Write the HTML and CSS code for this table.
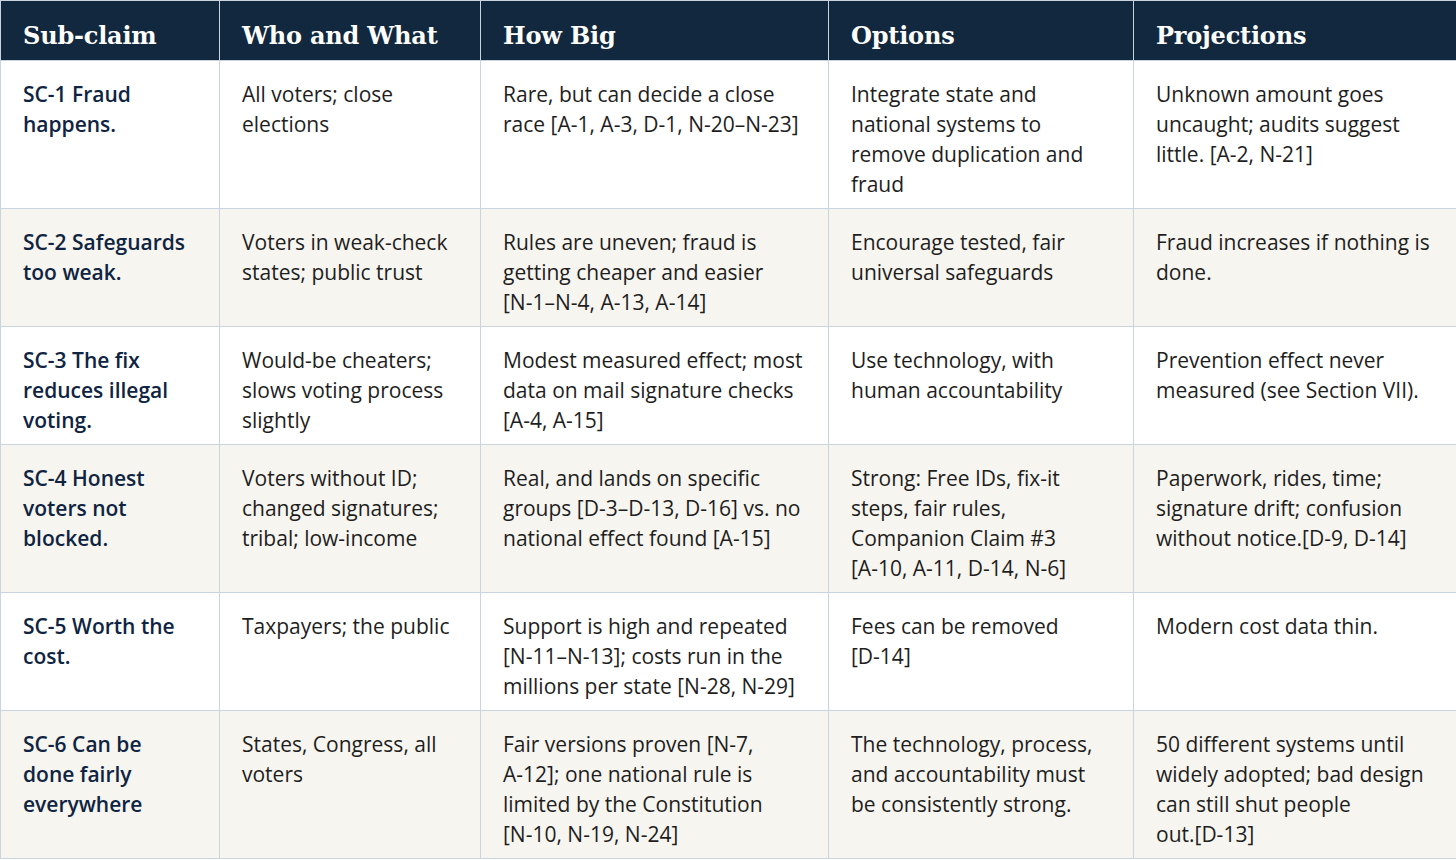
FILE: index.html
```html
<!DOCTYPE html>
<html lang="en">
<head>
<meta charset="utf-8">
<title>Sub-claims</title>
<link rel="stylesheet" href="styles.css">
</head>
<body>
<table class="claims">
  <colgroup>
    <col class="c1"><col class="c2"><col class="c3"><col class="c4"><col class="c5">
  </colgroup>
  <thead>
    <tr>
      <th>Sub-claim</th>
      <th>Who and What</th>
      <th>How Big</th>
      <th>Options</th>
      <th>Projections</th>
    </tr>
  </thead>
  <tbody>
    <tr>
      <td class="claim">SC-1 Fraud happens.</td>
      <td>All voters; close elections</td>
      <td>Rare, but can decide a close race [A-&#8288;1, A-&#8288;3, D-&#8288;1, N-&#8288;20–&#8288;N-&#8288;23]</td>
      <td>Integrate state and national systems to remove duplication and fraud</td>
      <td>Unknown amount goes uncaught; audits suggest little. [A-&#8288;2, N-&#8288;21]</td>
    </tr>
    <tr>
      <td class="claim">SC-2 Safeguards too weak.</td>
      <td>Voters in weak-check states; public trust</td>
      <td>Rules are uneven; fraud is getting cheaper and easier [N-&#8288;1–&#8288;N-&#8288;4, A-&#8288;13, A-&#8288;14]</td>
      <td>Encourage tested, fair universal safeguards</td>
      <td>Fraud increases if nothing is done.</td>
    </tr>
    <tr>
      <td class="claim">SC-3 The fix reduces illegal voting.</td>
      <td>Would-be cheaters; slows voting process slightly</td>
      <td>Modest measured effect; most data on mail signature checks [A-&#8288;4, A-&#8288;15]</td>
      <td>Use technology, with human accountability</td>
      <td>Prevention effect never measured (see Section VII).</td>
    </tr>
    <tr>
      <td class="claim">SC-4 Honest voters not blocked.</td>
      <td>Voters without ID; changed signatures; tribal; low-income</td>
      <td>Real, and lands on specific groups [D-&#8288;3–&#8288;D-&#8288;13, D-&#8288;16] vs. no national effect found [A-&#8288;15]</td>
      <td>Strong: Free IDs, fix-it steps, fair rules, Companion Claim #3 [A-&#8288;10, A-&#8288;11, D-&#8288;14, N-&#8288;6]</td>
      <td>Paperwork, rides, time; signature drift; confusion without notice.&#8288;[D-&#8288;9, D-&#8288;14]</td>
    </tr>
    <tr>
      <td class="claim">SC-5 Worth the cost.</td>
      <td>Taxpayers; the public</td>
      <td>Support is high and repeated [N-&#8288;11–&#8288;N-&#8288;13]; costs run in the millions per state [N-&#8288;28, N-&#8288;29]</td>
      <td>Fees can be removed [D-&#8288;14]</td>
      <td>Modern cost data thin.</td>
    </tr>
    <tr>
      <td class="claim">SC-6 Can be done fairly everywhere</td>
      <td>States, Congress, all voters</td>
      <td>Fair versions proven [N-&#8288;7, A-&#8288;12]; one national rule is limited by the Constitution [N-&#8288;10, N-&#8288;19, N-&#8288;24]</td>
      <td>The technology, process, and accountability must be consistently strong.</td>
      <td>50 different systems until widely adopted; bad design can still shut people out.&#8288;[D-&#8288;13]</td>
    </tr>
  </tbody>
</table>
</body>
</html>
```

FILE: styles.css
```css
html, body {
  margin: 0;
  padding: 0;
  background: #ffffff;
}

.claims {
  width: 1456px;
  table-layout: fixed;
  border-collapse: collapse;
  font-family: "Open Sans", "Noto Sans", sans-serif;
}

.c1 { width: 219px; }
.c2 { width: 261px; }
.c3 { width: 348px; }
.c4 { width: 305px; }
.c5 { width: 323px; }

.claims th {
  background: #12283f;
  color: #ffffff;
  font-family: "DejaVu Serif", "Liberation Serif", serif;
  font-weight: bold;
  font-size: 24px;
  text-align: left;
  height: 60px;
  padding: 10px 22px 0 22px;
  box-sizing: border-box;
  border: 1px solid #c9d4e0;
  letter-spacing: -0.2px;
}

.claims td {
  vertical-align: top;
  padding: 18px 22px 9px 22px;
  font-size: 21px;
  line-height: 30px;
  color: #1e1e1e;
  border: 1px solid #c9d4e0;
}

.claims tbody tr:nth-child(even) td {
  background: #f7f5ef;
}

.claims td.claim {
  font-weight: 600;
  color: #0f2442;
}
```
